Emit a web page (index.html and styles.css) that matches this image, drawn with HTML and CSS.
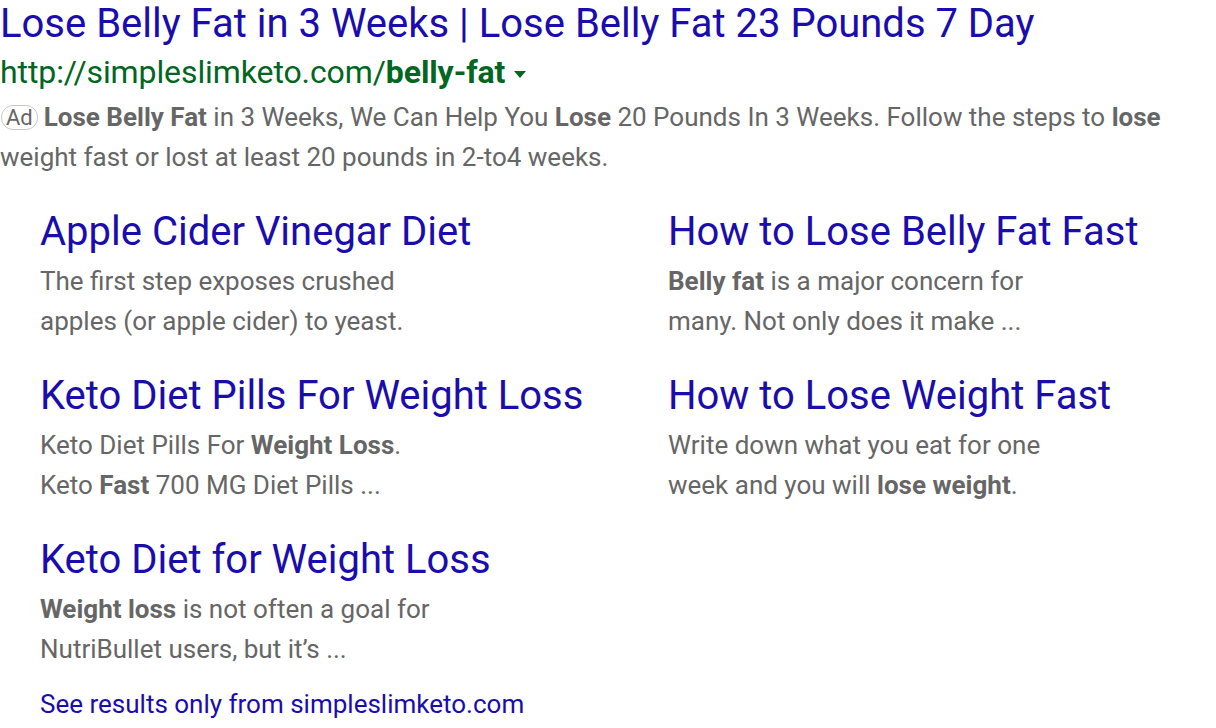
FILE: index.html
```html
<!DOCTYPE html>
<html>
<head>
<meta charset="utf-8">
<link rel="stylesheet" href="styles.css">
</head>
<body>
<div class="ad">
  <a class="headline" href="#">Lose Belly Fat in 3 Weeks | Lose Belly Fat 23 Pounds 7 Day</a>
  <div class="url">http://simpleslimketo.com/<b>belly-fat</b><span class="arrow"></span></div>
  <p class="desc"><span class="badge">Ad</span><b>Lose Belly Fat</b> in 3 Weeks, We Can Help You <b>Lose</b> 20 Pounds In 3 Weeks. Follow the steps to <b>lose</b> weight fast or lost at least 20 pounds in 2-to4 weeks.</p>
  <div class="sitelinks">
    <div class="sl">
      <a class="sl-title" href="#">Apple Cider Vinegar Diet</a>
      <p class="sl-desc">The first step exposes crushed<br>apples (or apple cider) to yeast.</p>
    </div>
    <div class="sl">
      <a class="sl-title" href="#">How to Lose Belly Fat Fast</a>
      <p class="sl-desc"><b>Belly fat</b> is a major concern for<br>many. Not only does it make ...</p>
    </div>
    <div class="sl">
      <a class="sl-title" href="#">Keto Diet Pills For Weight Loss</a>
      <p class="sl-desc">Keto Diet Pills For <b>Weight Loss</b>.<br>Keto <b>Fast</b> 700 MG Diet Pills ...</p>
    </div>
    <div class="sl">
      <a class="sl-title" href="#">How to Lose Weight Fast</a>
      <p class="sl-desc">Write down what you eat for one<br>week and you will <b>lose weight</b>.</p>
    </div>
    <div class="sl">
      <a class="sl-title" href="#">Keto Diet for Weight Loss</a>
      <p class="sl-desc"><b>Weight loss</b> is not often a goal for<br>NutriBullet users, but it’s ...</p>
    </div>
  </div>
  <a class="more" href="#">See results only from simpleslimketo.com</a>
</div>
</body>
</html>
```
FILE: styles.css
```css
html, body {
  margin: 0;
  padding: 0;
  background: #fff;
}
body {
  font-family: Roboto, "Liberation Sans", sans-serif;
  color: #666;
}
a {
  text-decoration: none;
}
.ad {
  display: flex;
  flex-direction: column;
  align-items: flex-start;
}
.headline {
  font-size: 40px;
  line-height: 48px;
  color: #1a0dab;
  white-space: nowrap;
}
.url {
  font-size: 32px;
  line-height: 48px;
  color: #006621;
  display: flex;
  align-items: center;
  letter-spacing: -0.1px;
}
.url b {
  font-weight: 700;
}
.arrow {
  width: 0;
  height: 0;
  border-left: 6px solid transparent;
  border-right: 6px solid transparent;
  border-top: 7px solid #006621;
  margin-left: 9px;
  margin-top: 4px;
}
.desc {
  margin: 1px 0 0;
  font-size: 26px;
  line-height: 40px;
  color: #666;
  max-width: 1190px;
}
.desc b, .sl-desc b {
  font-weight: 700;
}
.badge {
  display: inline-block;
  border: 1px solid #c8c8c8;
  border-radius: 12px;
  font-size: 22px;
  line-height: 23px;
  padding: 0 4px;
  margin: 0 6px 0 1px;
  color: #666;
  vertical-align: 1px;
}
.sitelinks {
  display: grid;
  grid-template-columns: 628px 1fr;
  row-gap: 27px;
  padding: 27px 0 0 40px;
  box-sizing: border-box;
  width: 100%;
}
.sl {
  display: flex;
  flex-direction: column;
  align-items: flex-start;
}
.sl-title {
  font-size: 40px;
  line-height: 56px;
  color: #1a0dab;
  white-space: nowrap;
}
.sl-desc {
  margin: 1px 0 0;
  font-size: 26px;
  line-height: 40px;
  color: #666;
  white-space: nowrap;
}
.more {
  margin: 15px 0 0 40px;
  font-size: 26px;
  line-height: 40px;
  color: #1a0dab;
}
```
